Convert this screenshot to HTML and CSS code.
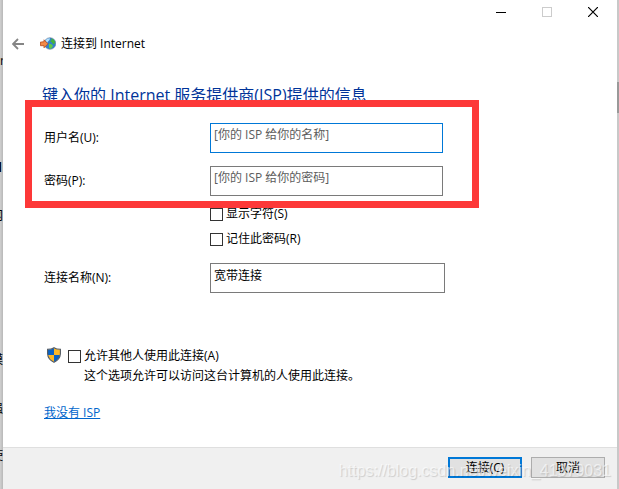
FILE: index.html
```
<!DOCTYPE html>
<html lang="zh-CN">
<head>
    <meta charset="UTF-8">
    <meta name="viewport" content="width=device-width, initial-scale=1.0">
    <title>连接到 Internet</title>
    <link rel="stylesheet" href="styles.css">
</head>
<body>
    <!-- window behind the dialog -->
    <div class="behind" aria-hidden="true">
        <span class="line line-1">er</span>
        <span class="line line-2">l</span>
        <span class="line line-3">网</span>
        <span class="line line-4">模</span>
        <span class="line line-5">强</span>
        <span class="line line-6">使</span>
    </div>
    <div class="scrollbar"></div>

    <div class="dialog">
        <div class="window-buttons">
            <button type="button" aria-label="最小化">
                <svg width="10" height="10" viewBox="0 0 10 10"><path d="M0 5.5h10" stroke="#000"/></svg>
            </button>
            <button type="button" aria-label="最大化" disabled>
                <svg width="10" height="10" viewBox="0 0 10 10"><rect x="0.5" y="0.5" width="9" height="9" fill="none" stroke="#ccc"/></svg>
            </button>
            <button type="button" aria-label="关闭">
                <svg width="10" height="10" viewBox="0 0 10 10"><path d="M0 0l10 10M10 0L0 10" stroke="#000" stroke-width="1.2"/></svg>
            </button>
        </div>

        <div class="header">
            <button type="button" class="back" aria-label="返回">
                <svg width="12" height="12" viewBox="0 0 12 12"><path d="M12 6H1M6 1L1 6l5 5" fill="none" stroke="#858585" stroke-width="1.8"/></svg>
            </button>
            <svg class="globe" width="16" height="14" viewBox="0 0 16 14">
                <circle cx="10" cy="6.5" r="5.8" fill="#2f80d0" stroke="#6d7f98" stroke-width="0.6"/>
                <path d="M5.5 3.5Q7 1 10 1.2L9.500 3 8 4.500 7 6z" fill="#b5e0fc"/>
                <path d="M11 1.2Q14 2 15.2 5L14 7.5 12.5 6.5 11.5 5 10 4.5 11.5 3z" fill="#45b53b"/>
                <path d="M9 6.500l3 1 1 1.500-2 3-2-1z" fill="#61cb47"/>
                <path d="M0.5 5h2V4.8H4V2.8L8 6.8 4 10.8V8.7H0.5z" fill="#f38a48" stroke="#b84a1b" stroke-width="0.8"/>
            </svg>
            <span>连接到 Internet</span>
        </div>

        <form class="content">
            <h1>键入你的 Internet 服务提供商(ISP)提供的信息</h1>

            <div class="credentials">
                <div class="row">
                    <label for="user">用户名(U):</label>
                    <input type="text" id="user" class="field active" placeholder="[你的 ISP 给你的名称]">
                </div>
                <div class="row">
                    <label for="password">密码(P):</label>
                    <input type="text" id="password" class="field" placeholder="[你的 ISP 给你的密码]">
                </div>
            </div>

            <div class="checks">
                <label class="check"><input type="checkbox"> 显示字符(S)</label>
                <label class="check"><input type="checkbox"> 记住此密码(R)</label>
            </div>

            <div class="row name-row">
                <label for="name">连接名称(N):</label>
                <input type="text" id="name" class="field" value="宽带连接">
            </div>

            <div class="share">
                <svg width="14" height="16" viewBox="0 0 14 16">
                    <path d="M7 1Q4.500 2.500 1 2.500V8H7z" fill="#0a62c4"/>
                    <path d="M7 1Q9.500 2.500 13 2.500V8H7z" fill="#fdb827"/>
                    <path d="M1 8H7V15Q1.800 12.500 1 8z" fill="#fdb827"/>
                    <path d="M13 8H7V15Q12.200 12.500 13 8z" fill="#0a62c4"/>
                    <path d="M7 0.7Q9.500 2.300 13.400 2.300V7Q13 12.500 7 15.300Q1 12.500 0.600 7V2.300Q4.500 2.300 7 0.700z" fill="none" stroke="#505860" stroke-width="1.1"/>
                </svg>
                <div>
                    <label class="check"><input type="checkbox"> 允许其他人使用此连接(A)</label>
                    <p>这个选项允许可以访问这台计算机的人使用此连接。</p>
                </div>
            </div>

            <a href="#" class="no-isp">我没有 ISP</a>
        </form>

        <div class="footer">
            <button type="button" class="primary">连接(C)</button>
            <button type="button">取消</button>
            <span class="watermark">https://blog.csdn.net/weixin_41979031</span>
        </div>
    </div>
</body>
</html>
```
FILE: styles.css
```
* {
    box-sizing: border-box;
}
body {
    margin: 0;
    padding: 0 2px 0 3px;
    min-height: 100vh;
    display: flex;
    position: relative;
    overflow: hidden;
    background: #c8c8c8;
    color: #000;
    font-family: "Open Sans", "Noto Sans CJK SC", sans-serif;
    font-size: 12px;
    line-height: 18px;
}
button, input {
    font: inherit;
    color: inherit;
}

/* background window */
.behind {
    position: absolute;
    left: 0;
    top: 0;
    width: 3px;
    height: 100%;
    overflow: hidden;
    background: linear-gradient(to right, #d0d0d0, #b8b8b8);
}
.line {
    position: absolute;
    right: 0;
}
.line-1 { top: 52px; right: -2px; }
.line-2 { top: 159px; right: 1px; font-weight: bold; }
.line-3 { top: 207px; }
.line-4 { top: 351px; }
.line-5 { top: 400px; }
.line-6 { top: 447px; }
.scrollbar {
    position: absolute;
    right: 0;
    top: 82px;
    width: 2px;
    height: 31px;
    background: #999;
}

.dialog {
    flex: 1;
    display: flex;
    flex-direction: column;
    position: relative;
    background: #fff;
}
.window-buttons {
    display: flex;
    justify-content: flex-end;
    padding-right: 1px;
}
.window-buttons button {
    width: 46px;
    height: 24px;
    padding: 0;
    border: none;
    background: none;
    display: flex;
    align-items: center;
    justify-content: center;
}
.header {
    display: flex;
    align-items: center;
    padding: 11px 9px 0;
}
.back {
    padding: 0;
    border: none;
    background: none;
    display: flex;
}
.globe {
    margin: 0 5px 0 16px;
}

.content {
    flex: 1;
    padding: 0 41px;
}
h1 {
    margin: 30px 0 0 -2px;
    color: #039;
    font-size: 16px;
    font-weight: normal;
    line-height: 24px;
}
.row {
    display: flex;
    align-items: center;
}
.row label {
    width: 166px;
}
.field {
    flex: 0 1 235px;
    min-width: 0;
    height: 30px;
    padding: 0 3px 7px;
    border: 1px solid #7a7a7a;
    border-radius: 0;
    background: #fff;
    outline: none;
}
.field::placeholder {
    color: #5c5c5c;
    opacity: 1;
}
.active {
    border-color: #0078d7;
}
.credentials {
    display: grid;
    gap: 13px;
    margin-top: 16px;
    position: relative;
}
.credentials .field {
    flex-basis: 233px;
}
/* red marker drawn over the two fields */
.credentials::after {
    content: "";
    box-sizing: border-box;
    position: absolute;
    left: -19px;
    top: -23px;
    bottom: -12px;
    width: 454px;
    border: 7px solid #fd3838;
    pointer-events: none;
}
.checks {
    display: grid;
    gap: 7px;
    margin: 9px 0 0 166px;
}
.check {
    display: flex;
    align-items: center;
    gap: 3px;
}
.check input {
    appearance: none;
    width: 13px;
    height: 13px;
    margin: 0;
    border: 1px solid #333;
    background: #fff;
}
.check input:checked {
    background: #0078d7;
}
.name-row {
    margin-top: 15px;
}
.share {
    display: flex;
    align-items: flex-start;
    gap: 7px;
    margin: 54px 0 0 3px;
}
.share p {
    margin: 2px 0 0 16px;
}
.no-isp {
    display: inline-block;
    margin-top: 19px;
    color: #06c;
}

.footer {
    display: flex;
    justify-content: flex-end;
    gap: 9px;
    position: relative;
    padding: 9px 12px 11px;
    border-top: 1px solid #dfdfdf;
    background: #f0f0f0;
}
.footer button {
    width: 74px;
    height: 21px;
    padding: 0;
    border: 1px solid #adadad;
    background: #e1e1e1;
    line-height: 17px;
}
.footer .primary {
    border: 2px solid #0078d7;
}
.watermark {
    position: absolute;
    right: 6px;
    top: 14px;
    color: rgba(255, 255, 255, 0.6);
    font-family: "Liberation Sans", sans-serif;
    font-size: 16px;
    text-shadow: 1px 1px 1px rgba(0, 0, 0, 0.15);
    pointer-events: none;
}
```
